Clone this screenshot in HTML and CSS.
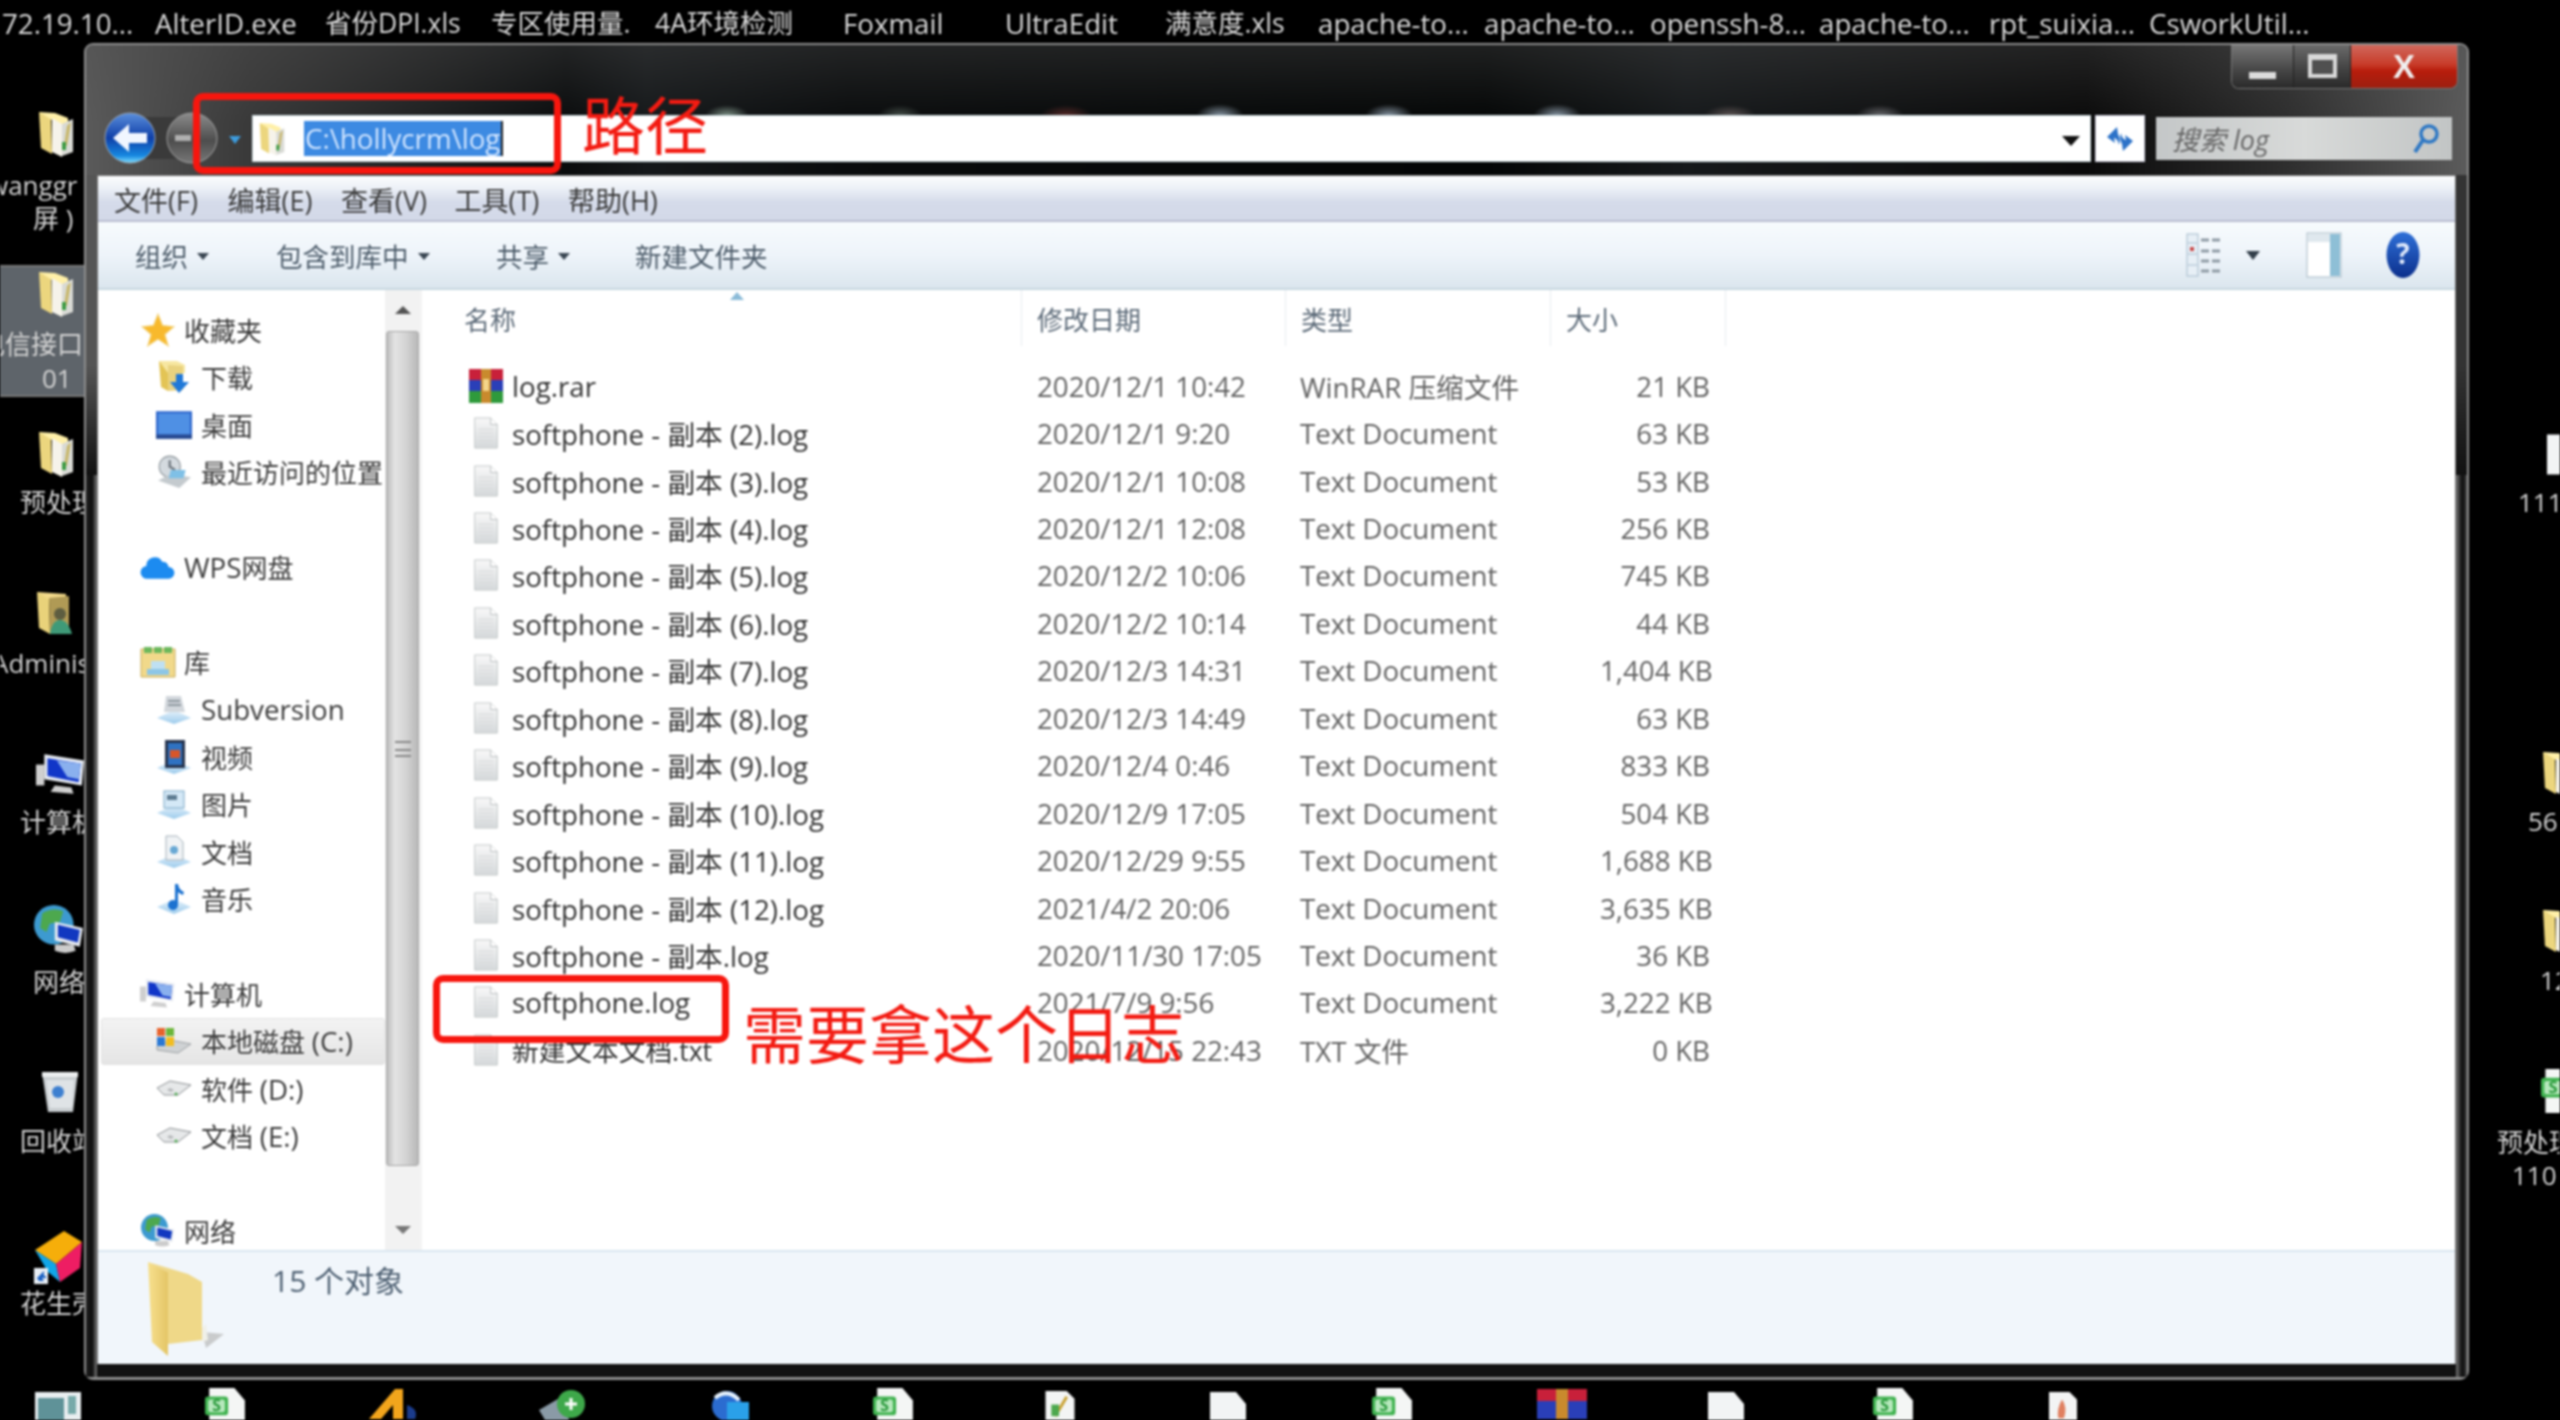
FILE: index.html
```html
<!DOCTYPE html>
<html lang="zh">
<head>
<meta charset="utf-8">
<title>log</title>
<link rel="stylesheet" href="styles.css">
</head>
<body>
<svg class="defs" width="0" height="0" aria-hidden="true">
  <defs>
    <linearGradient id="fy" x1="0" x2="1" y1="0" y2="0"><stop offset="0" stop-color="#f7e08e"/><stop offset="1" stop-color="#e4c566"/></linearGradient>
    <linearGradient id="sky" x1="0" x2="0" y1="0" y2="1"><stop offset="0" stop-color="#e8f3fb"/><stop offset="1" stop-color="#9ccbec"/></linearGradient>
    <linearGradient id="back" x1="0" x2="0" y1="0" y2="1"><stop offset="0" stop-color="#5b8fdc"/><stop offset=".5" stop-color="#0f3fa8"/><stop offset=".85" stop-color="#1687e0"/><stop offset="1" stop-color="#7fe0ff"/></linearGradient>
    <linearGradient id="fwd" x1="0" x2="0" y1="0" y2="1"><stop offset="0" stop-color="#8c8c8c"/><stop offset=".55" stop-color="#4d4d4d"/><stop offset="1" stop-color="#777"/></linearGradient>
    <linearGradient id="help" x1="0" x2="0" y1="0" y2="1"><stop offset="0" stop-color="#2f70d8"/><stop offset="1" stop-color="#0b2f8c"/></linearGradient>
    <linearGradient id="thumbdoc" x1="0" x2="0" y1="0" y2="1"><stop offset="0" stop-color="#f8f8f8"/><stop offset="1" stop-color="#d6dadc"/></linearGradient>

    <symbol id="i-deskfolder" viewBox="0 0 36 48"><path d="M1 2 13 6 14 44 3 38Z" fill="#ecd67e"/><path d="M1 2 17 3 30 8 30 20 14 10Z" fill="#fff0a8"/><path d="M14 8 24 14 24 47 14 42Z" fill="#f6f3ea"/><path d="M24 14 35 9 35 42 24 46Z" fill="#d9dad5"/><path d="M29 16 33 12 29 36 26 36Z" fill="#c8b76a"/><path d="M24 32h4v8h-4z" fill="#3c9a45"/></symbol>
    <symbol id="i-admfolder" viewBox="0 0 36 48"><path d="M1 2 13 6 14 44 3 38Z" fill="#e9d27a"/><path d="M1 2 30 4 30 20 14 10Z" fill="#f2d98a"/><path d="M13 8 33 6 33 42 14 44Z" fill="#b09a55"/><circle cx="24" cy="24" r="6" fill="#5d5d40"/><path d="M14 44q2-14 10-14t12 14Z" fill="#3f9a78"/></symbol>
    <symbol id="i-comp" viewBox="0 0 48 44"><path d="M0 12h8v20H0z" fill="#cfcfcf"/><path d="M8 2 46 8 44 32 8 26Z" fill="#e8ecf3"/><path d="M11 6 43 11 41 29 11 23Z" fill="#1136c8"/><path d="M20 8 30 24 41 26 43 11Z" fill="#8ab0ee"/><path d="M18 32 34 34 36 40 14 38Z" fill="#cfcfcf"/></symbol>
    <symbol id="i-net" viewBox="0 0 48 48"><circle cx="19" cy="19" r="19" fill="#3d9ad0"/><path d="M8 8q10-6 20-2l-3 10-10 2-3 8-6-4Z" fill="#4da84e"/><path d="M20 16 47 22 44 40 20 34Z" fill="#e6eaf0"/><path d="M23 19 44 24 42 36 23 31Z" fill="#1138c0"/><path d="M20 38h18l2 6q-10 4-20 0Z" fill="#ccc"/></symbol>
    <symbol id="i-trash" viewBox="0 0 40 46"><path d="M2 4h36l-5 40H8Z" fill="#c8cdd0"/><path d="M2 4h36v5H2z" fill="#eceeef"/><path d="M6 12h28l-2 28H10Z" fill="#dfe3e6"/><circle cx="18" cy="24" r="6" fill="#3d7fd0"/></symbol>
    <symbol id="i-cube" viewBox="0 0 50 60"><path d="M1 22 30 3 48 14 22 36Z" fill="#f6ae0a"/><path d="M1 22 22 36 26 54 14 44Z" fill="#11a6e8"/><path d="M22 36 48 14 46 40 26 54Z" fill="#ee1d63"/><path d="M0 40h14v16H0z" fill="#e8eef4"/><path d="M3 50 10 43v5h2v2H8l2 3H5Z" fill="#1c62c4"/></symbol>
    <symbol id="i-doc" viewBox="0 0 26 34"><path d="M1 1h17l7 7v25H1Z" fill="url(#thumbdoc)" stroke="#c2c6c8"/><path d="M18 1v7h7" fill="#fff" stroke="#b8bcbe"/><path d="M5 13h16M5 17h16M5 21h16M5 25h16M5 29h16" stroke="#d5d8d9"/></symbol>
    <symbol id="i-wdoc" viewBox="0 0 40 40"><path d="M2 0h26l10 12v28H2Z" fill="#f2f4f5"/></symbol>
    <symbol id="i-sdoc" viewBox="0 0 40 40"><path d="M4 0h24l10 12v28H4Z" fill="#f4f6f5"/><rect x="0" y="8" width="22" height="18" rx="3" fill="#3fb24f"/><rect x="3" y="11" width="16" height="12" rx="2" fill="#b7e8bd"/><text x="11" y="22" class="svgs">S</text></symbol>
    <symbol id="i-rar" viewBox="0 0 36 34"><rect x="1" y="0" width="34" height="11" fill="#c8203a"/><rect x="1" y="11" width="34" height="11" fill="#2a3fb8"/><rect x="1" y="22" width="34" height="12" fill="#2f9a3c"/><rect x="13" y="0" width="10" height="34" fill="#c98a2d"/><rect x="15" y="10" width="6" height="12" fill="#f4d58a"/></symbol>
    <symbol id="i-star" viewBox="0 0 30 30"><path d="M15 1 19 11 29 12 21 19 24 29 15 23 6 29 9 19 1 12 11 11Z" fill="#f8b92c" stroke="#f3d27a"/></symbol>
    <symbol id="i-dl" viewBox="0 0 32 34"><path d="M1 1 10 4V31L3 27Z" fill="#e3c455"/><path d="M1 1h18l8 4v8H10Z" fill="#f7e7a1"/><path d="M10 5 25 6V30L10 31Z" fill="#e9d27f"/><path d="M18 14h7v8h6L21 33 12 22h6Z" fill="#1f78d8"/></symbol>
    <symbol id="i-desktop" viewBox="0 0 34 26"><rect width="34" height="26" fill="#2e66cc"/><rect x="2" y="2" width="30" height="20" fill="#4f90e4"/><rect y="22" width="34" height="4" fill="#284a90"/></symbol>
    <symbol id="i-recent" viewBox="0 0 34 32"><circle cx="13" cy="11" r="10" fill="#d4dadf" stroke="#8f979c"/><path d="M13 5v6l5 3" stroke="#687078" fill="none" stroke-width="2"/><path d="M2 24 14 18 33 21 22 31Z" fill="#c4cace"/><path d="M14 14h14l-2 8H12Z" fill="#7fc0e6"/></symbol>
    <symbol id="i-cloud" viewBox="0 0 34 24"><path d="M7 23a6 6 0 0 1-1-12 8 8 0 0 1 15-4 6 6 0 0 1 6 5 5.500 5.500 0 0 1 0 11Z" fill="#1c8bf0"/></symbol>
    <symbol id="i-lib" viewBox="0 0 36 32"><path d="M1 3h34v28H1Z" fill="#f1d98a" stroke="#c9ad5c"/><path d="M4 1h8v6H4zM14 1h8v6h-8zM24 1h8v6h-8z" fill="#6cb85c"/><path d="M7 23h22v6H7Z" fill="#8dc6e6"/><path d="M11 15h14v8H11Z" fill="#bfe0f2"/></symbol>
    <symbol id="i-svn" viewBox="0 0 36 30"><path d="M1 24 18 16 35 24 18 30Z" fill="url(#sky)"/><path d="M10 2h15l4 16H8Z" fill="#d2d7dc"/><path d="M12 7h12M12 11h13" stroke="#8e979f" stroke-width="2"/></symbol>
    <symbol id="i-vid" viewBox="0 0 36 34"><path d="M1 28 18 20 35 28 18 34Z" fill="url(#sky)"/><rect x="9" y="0" width="20" height="28" fill="#26344e"/><rect x="12" y="3" width="14" height="22" fill="#2f72c2"/><path d="M14 10h10v8H14Z" fill="#d8562a"/></symbol>
    <symbol id="i-pic" viewBox="0 0 36 30"><path d="M1 24 18 16 35 24 18 30Z" fill="url(#sky)"/><rect x="8" y="2" width="20" height="17" fill="#d4e8f6" stroke="#7ba7c6"/><path d="M11 6h10v5H11Z" fill="#5d7c92"/></symbol>
    <symbol id="i-txt" viewBox="0 0 36 32"><path d="M1 26 18 18 35 26 18 32Z" fill="url(#sky)"/><path d="M10 0h11l6 6v18H10Z" fill="#f0f3f5" stroke="#a6b2bb"/><circle cx="18" cy="14" r="4" fill="#68a8d4"/></symbol>
    <symbol id="i-music" viewBox="0 0 36 30"><path d="M1 23 18 15 35 23 18 30Z" fill="url(#sky)"/><path d="M19 0h3q1 6 6 8l-1 3q-3-1-5-3v13a5 5 0 1 1-3-4.500Z" fill="#1c72d0"/></symbol>
    <symbol id="i-drivec" viewBox="0 0 36 30"><path d="M1 20 14 14 35 18 22 27 1 24Z" fill="#cfd2d4" stroke="#9da1a4"/><path d="M1 2h8v8H1z" fill="#e8622c"/><path d="M10 2h8v8h-8z" fill="#6cb63a"/><path d="M1 11h8v9H1z" fill="#2a78d4"/><path d="M10 11h8v9h-8z" fill="#f2bd20"/></symbol>
    <symbol id="i-drive" viewBox="0 0 36 20"><path d="M1 9 14 2 35 6 22 16 8 16Z" fill="#e6e8e9" stroke="#8d9194"/><path d="M14 9l4 2-3 2-4-2Z" fill="#b5b8ba"/><circle cx="20" cy="15" r="1.500" fill="#49a84c"/></symbol>
    <symbol id="i-sfolder" viewBox="0 0 78 98"><path d="M56 72 78 74 60 88Z" fill="#c9cbcc"/><path d="M2 2 42 14 56 22 56 80 22 84 22 12Z" fill="#efd888"/><path d="M2 2 22 12 22 96 6 82Z" fill="url(#fy)"/><path d="M56 68 60 64 62 80 56 82Z" fill="#f0f0e8"/></symbol>
    <symbol id="i-views" viewBox="0 0 36 44"><rect x="1" y="1" width="11" height="42" fill="#e7eff6" stroke="#a6bccc"/><path d="M2 10h9M2 21h9M2 32h9" stroke="#a6bccc"/><rect x="4" y="14" width="4" height="4" fill="#c84a4a"/><path d="M15 7h8M26 7h8M15 18h8M26 18h8M15 28h8M26 28h8M15 38h8M26 38h8" stroke="#8e9aa4" stroke-width="3"/></symbol>
    <symbol id="i-pane" viewBox="0 0 36 46"><rect x="1" y="1" width="34" height="44" fill="#fff" stroke="#a8bac6"/><rect x="2" y="2" width="32" height="8" fill="#dfe8ee"/><rect x="24" y="2" width="10" height="42" fill="#8ebfd6"/></symbol>
    <symbol id="i-help" viewBox="0 0 34 48"><ellipse cx="17" cy="24" rx="16.500" ry="23" fill="url(#help)"/><text x="17" y="33" class="svgq">?</text></symbol>
  </defs>
</svg>

<div class="stage">
  <!-- Desktop -->
  <div class="strip">
    <span class="w">72.19.10...</span><span class="w">AlterID.exe</span><span>省份DPI.xls</span><span>专区使用量.</span><span>4A环境检测</span><span class="w">Foxmail</span><span class="w">UltraEdit</span><span>满意度.xls</span><span class="w">apache-to...</span><span class="w">apache-to...</span><span class="w">openssh-8...</span><span class="w">apache-to...</span><span class="w">rpt_suixia...</span><span class="w">CsworkUtil...</span>
  </div>

  <div class="desk-sel"></div>
  <svg class="dk a1"><use href="#i-deskfolder"/></svg>
  <svg class="dk a2"><use href="#i-deskfolder"/></svg>
  <svg class="dk a3"><use href="#i-deskfolder"/></svg>
  <svg class="dk a4"><use href="#i-admfolder"/></svg>
  <svg class="dk a5"><use href="#i-comp"/></svg>
  <svg class="dk a6"><use href="#i-net"/></svg>
  <svg class="dk a7"><use href="#i-trash"/></svg>
  <svg class="dk a8"><use href="#i-cube"/></svg>
  <span class="lab l1">wanggr</span><span class="lab l2">屏 )</span>
  <span class="lab l3">电信接口</span><span class="lab l4">01</span>
  <span class="lab l5">预处理</span><span class="lab l6">Administrator</span>
  <span class="lab l7">计算机</span><span class="lab l8">网络</span>
  <span class="lab l9">回收站</span><span class="lab l10">花生壳</span>

  <svg class="dk r1"><use href="#i-wdoc"/></svg>
  <svg class="dk r2"><use href="#i-deskfolder"/></svg>
  <svg class="dk r3"><use href="#i-deskfolder"/></svg>
  <svg class="dk r4"><use href="#i-sdoc"/></svg>
  <span class="lab m1">111</span><span class="lab m2">56</span><span class="lab m3">12</span><span class="lab m4">预处理</span><span class="lab m5">110</span>

  <svg class="dk b1" viewBox="0 0 46 30"><rect width="46" height="30" fill="#e8eef0"/><rect x="3" y="6" width="26" height="24" fill="#5f9298"/><rect x="33" y="4" width="8" height="18" fill="#7aa"/></svg>
  <svg class="dk b2"><use href="#i-sdoc"/></svg>
  <svg class="dk b3" viewBox="0 0 50 30"><path d="M0 30 26 0h8v30h-10V16L12 30Z" fill="#f2a51c"/><path d="M38 16q12 4 8 14h-8Z" fill="#1b3c8c"/></svg>
  <svg class="dk b4" viewBox="0 0 46 30"><path d="M0 20 24 6 30 30H6Z" fill="#8a9aa6"/><circle cx="32" cy="14" r="14" fill="#3ea84a"/><path d="M26 14h12M32 8v12" stroke="#fff" stroke-width="3"/></svg>
  <svg class="dk b5" viewBox="0 0 46 30"><circle cx="22" cy="16" r="15" fill="#2b6cd0"/><path d="M10 8q12-10 24 2" stroke="#e6f0fa" stroke-width="4" fill="none"/><rect x="22" y="12" width="22" height="18" fill="#2aa0e8"/></svg>
  <svg class="dk b6"><use href="#i-sdoc"/></svg>
  <svg class="dk b7" viewBox="0 0 34 30"><path d="M2 0h22l8 8v22H2Z" fill="#f3f4f4"/><path d="M12 26 24 6" stroke="#c8a030" stroke-width="3"/><path d="M8 14h8v12H8Z" fill="#4da84e"/></svg>
  <svg class="dk b8"><use href="#i-wdoc"/></svg>
  <svg class="dk b9"><use href="#i-sdoc"/></svg>
  <svg class="dk b10" viewBox="0 0 50 30"><rect x="0" y="0" width="50" height="12" fill="#c8203a"/><rect x="0" y="12" width="50" height="18" fill="#2a3fb8"/><rect x="19" y="0" width="12" height="30" fill="#c98a2d"/></svg>
  <svg class="dk b11"><use href="#i-wdoc"/></svg>
  <svg class="dk b12"><use href="#i-sdoc"/></svg>
  <svg class="dk b13" viewBox="0 0 34 30"><path d="M2 0h22l8 8v22H2Z" fill="#f3f4f4"/><path d="M16 8q6 8 2 20h-6q-2-10 4-20Z" fill="#e08060"/></svg>

  <!-- Explorer window -->
  <div class="window">
    <div class="glass">
      <div class="caption">
        <span class="cap cap-min"><i></i></span>
        <span class="cap cap-max"><i></i></span>
        <span class="cap cap-close">X</span>
      </div>
      <div class="navrow">
        <svg class="navbtns" viewBox="0 0 146 54">
          <path d="M26 6h70v42H26Z" fill="#3a3a3a"/>
          <circle cx="27" cy="27" r="25" fill="url(#back)" stroke="#9aa6b4"/>
          <path d="M10 27 26 13v9h18v10H26v9Z" fill="#f1f6ff"/>
          <circle cx="89" cy="27" r="25" fill="url(#fwd)" stroke="#a0a0a0"/>
          <path d="M72 24h16v6H72Z" fill="#b0b0b0"/>
          <path d="M126 25h12l-6 8Z" fill="#3d9bdc"/>
        </svg>
        <div class="addr">
          <svg class="addr-ico"><use href="#i-deskfolder"/></svg>
          <span class="addr-text">C:\hollycrm\log</span><span class="caret"></span>
          <span class="addr-drop"></span>
        </div>
        <div class="refresh">
          <svg viewBox="0 0 30 26"><path d="M2 11 12 1l1 7q3 5 1 11-1-6-5-7l1 5Z" fill="#2c72c8"/><path d="M28 15 18 25l-1-7q-3-5-1-11 1 6 5 7l-1-5Z" fill="#2c72c8"/></svg>
        </div>
        <div class="search">
          <span>搜索 log</span>
          <svg viewBox="0 0 28 30"><circle cx="17" cy="10" r="8" fill="none" stroke="#2f78c4" stroke-width="3.500"/><path d="M11 16 3 28" stroke="#2f78c4" stroke-width="4"/></svg>
        </div>
      </div>
    </div>

    <div class="client">
      <div class="menubar">
        <span>文件(F)</span><span>编辑(E)</span><span>查看(V)</span><span>工具(T)</span><span>帮助(H)</span>
      </div>
      <div class="toolbar">
        <div class="tb-left">
          <span class="tb">组织<i></i></span>
          <span class="tb">包含到库中<i></i></span>
          <span class="tb">共享<i></i></span>
          <span class="tb">新建文件夹</span>
        </div>
        <div class="tb-right">
          <svg class="ic-views"><use href="#i-views"/></svg><i class="views-arrow"></i>
          <svg class="ic-pane"><use href="#i-pane"/></svg>
          <svg class="ic-help"><use href="#i-help"/></svg>
        </div>
      </div>
      <div class="main">
        <nav class="tree">
          <div class="group">
            <div class="node top"><svg><use href="#i-star"/></svg>收藏夹</div>
            <div class="node"><svg><use href="#i-dl"/></svg>下载</div>
            <div class="node"><svg><use href="#i-desktop"/></svg>桌面</div>
            <div class="node"><svg><use href="#i-recent"/></svg>最近访问的位置</div>
          </div>
          <div class="group">
            <div class="node top"><svg><use href="#i-cloud"/></svg><span class="lat">WPS</span>网盘</div>
          </div>
          <div class="group">
            <div class="node top"><svg><use href="#i-lib"/></svg>库</div>
            <div class="node"><svg><use href="#i-svn"/></svg><span class="lat">Subversion</span></div>
            <div class="node"><svg><use href="#i-vid"/></svg>视频</div>
            <div class="node"><svg><use href="#i-pic"/></svg>图片</div>
            <div class="node"><svg><use href="#i-txt"/></svg>文档</div>
            <div class="node"><svg><use href="#i-music"/></svg>音乐</div>
          </div>
          <div class="group">
            <div class="node top"><svg><use href="#i-comp"/></svg>计算机</div>
            <div class="node current"><svg><use href="#i-drivec"/></svg>本地磁盘&nbsp;<span class="lat">(C:)</span></div>
            <div class="node"><svg><use href="#i-drive"/></svg>软件&nbsp;<span class="lat">(D:)</span></div>
            <div class="node"><svg><use href="#i-drive"/></svg>文档&nbsp;<span class="lat">(E:)</span></div>
          </div>
          <div class="group">
            <div class="node top"><svg><use href="#i-net"/></svg>网络</div>
          </div>
        </nav>
        <div class="vscroll">
          <i class="arrow-up"></i>
          <div class="thumb"><b></b></div>
          <i class="arrow-down"></i>
        </div>
        <div class="files">
          <div class="header">
            <span class="h-name">名称</span><span class="h-date">修改日期</span><span class="h-type">类型</span><span class="h-size">大小</span>
            <i class="sort"></i>
          </div>
          <div class="list">
            <div class="row"><span class="n"><svg class="rar"><use href="#i-rar"/></svg>log.rar</span><span>2020/12/1 10:42</span><span>WinRAR 压缩文件</span><span class="s">21 KB</span></div>
            <div class="row"><span class="n"><svg><use href="#i-doc"/></svg>softphone - 副本 (2).log</span><span>2020/12/1 9:20</span><span>Text Document</span><span class="s">63 KB</span></div>
            <div class="row"><span class="n"><svg><use href="#i-doc"/></svg>softphone - 副本 (3).log</span><span>2020/12/1 10:08</span><span>Text Document</span><span class="s">53 KB</span></div>
            <div class="row"><span class="n"><svg><use href="#i-doc"/></svg>softphone - 副本 (4).log</span><span>2020/12/1 12:08</span><span>Text Document</span><span class="s">256 KB</span></div>
            <div class="row"><span class="n"><svg><use href="#i-doc"/></svg>softphone - 副本 (5).log</span><span>2020/12/2 10:06</span><span>Text Document</span><span class="s">745 KB</span></div>
            <div class="row"><span class="n"><svg><use href="#i-doc"/></svg>softphone - 副本 (6).log</span><span>2020/12/2 10:14</span><span>Text Document</span><span class="s">44 KB</span></div>
            <div class="row"><span class="n"><svg><use href="#i-doc"/></svg>softphone - 副本 (7).log</span><span>2020/12/3 14:31</span><span>Text Document</span><span class="s">1,404 KB</span></div>
            <div class="row"><span class="n"><svg><use href="#i-doc"/></svg>softphone - 副本 (8).log</span><span>2020/12/3 14:49</span><span>Text Document</span><span class="s">63 KB</span></div>
            <div class="row"><span class="n"><svg><use href="#i-doc"/></svg>softphone - 副本 (9).log</span><span>2020/12/4 0:46</span><span>Text Document</span><span class="s">833 KB</span></div>
            <div class="row"><span class="n"><svg><use href="#i-doc"/></svg>softphone - 副本 (10).log</span><span>2020/12/9 17:05</span><span>Text Document</span><span class="s">504 KB</span></div>
            <div class="row"><span class="n"><svg><use href="#i-doc"/></svg>softphone - 副本 (11).log</span><span>2020/12/29 9:55</span><span>Text Document</span><span class="s">1,688 KB</span></div>
            <div class="row"><span class="n"><svg><use href="#i-doc"/></svg>softphone - 副本 (12).log</span><span>2021/4/2 20:06</span><span>Text Document</span><span class="s">3,635 KB</span></div>
            <div class="row"><span class="n"><svg><use href="#i-doc"/></svg>softphone - 副本.log</span><span>2020/11/30 17:05</span><span>Text Document</span><span class="s">36 KB</span></div>
            <div class="row"><span class="n"><svg><use href="#i-doc"/></svg>softphone.log</span><span>2021/7/9 9:56</span><span>Text Document</span><span class="s">3,222 KB</span></div>
            <div class="row"><span class="n cn"><svg><use href="#i-doc"/></svg>新建文本文档.txt</span><span>2020/12/15 22:43</span><span>TXT 文件</span><span class="s">0 KB</span></div>
          </div>
        </div>
      </div>
      <div class="status">
        <svg class="st-folder"><use href="#i-sfolder"/></svg>
        <span class="st-text">15 个对象</span>
      </div>
    </div>
  </div>

  <!-- Red annotations -->
  <div class="mark mark-path"></div>
  <div class="note note-path">路径</div>
  <div class="mark mark-file"></div>
  <div class="note note-file">需要拿这个日志</div>
</div>
</body>
</html>
```

FILE: styles.css
```css
* { box-sizing: border-box; }
html, body { margin: 0; padding: 0; background: #000; }
body {
  width: 2560px;
  height: 1420px;
  overflow: hidden;
  font-family: "Open Sans", "Noto Sans CJK SC", sans-serif;
  font-size: 26px;
  color: #333;
}
.defs { position: absolute; }
.svgs { font: 700 15px "Open Sans", sans-serif; fill: #2a9a3c; text-anchor: middle; }
.svgq { font: 700 28px "Open Sans", sans-serif; fill: #dfe9fb; text-anchor: middle; }
.lat { font-size: 27.700px; }

.stage {
  position: relative;
  width: 2560px;
  height: 1420px;
  background: #000;
  overflow: hidden;
  filter: blur(0.9px);
}

/* Desktop */
.strip {
  display: grid;
  grid-template-columns: 153px 170px 166px 164px 188px 162px 160px 153px 166px 166px 169px 170px 160px auto;
  padding: 4px 0 0 2px;
  height: 43px;
  line-height: 38px;
  color: #dcdcdc;
  white-space: nowrap;
  font-size: 26.500px;
}
.strip .w { font-size: 27.700px; }
.desk-sel { position: absolute; left: 0; top: 265px; width: 84px; height: 132px; background: #5e646a; border-top: 2px solid #777; border-bottom: 2px solid #777; }
.dk { position: absolute; overflow: hidden; }
.a1 { left: 38px; top: 110px; width: 36px; height: 48px; }
.a2 { left: 38px; top: 270px; width: 36px; height: 48px; }
.a3 { left: 38px; top: 430px; width: 36px; height: 48px; }
.a4 { left: 36px; top: 590px; width: 36px; height: 48px; }
.a5 { left: 36px; top: 752px; width: 50px; height: 46px; }
.a6 { left: 34px; top: 905px; width: 50px; height: 50px; }
.a7 { left: 40px; top: 1068px; width: 40px; height: 46px; }
.a8 { left: 34px; top: 1228px; width: 50px; height: 60px; }
.r1 { left: 2545px; top: 433px; width: 40px; height: 43px; }
.r2 { left: 2542px; top: 750px; width: 36px; height: 48px; }
.r3 { left: 2542px; top: 908px; width: 36px; height: 48px; }
.r4 { left: 2541px; top: 1068px; width: 44px; height: 46px; }
.b1 { left: 35px; top: 1392px; width: 46px; height: 30px; }
.b2 { left: 205px; top: 1388px; width: 42px; height: 42px; }
.b3 { left: 369px; top: 1388px; width: 50px; height: 32px; }
.b4 { left: 539px; top: 1390px; width: 46px; height: 30px; }
.b5 { left: 705px; top: 1390px; width: 46px; height: 30px; }
.b6 { left: 873px; top: 1388px; width: 42px; height: 42px; }
.b7 { left: 1043px; top: 1391px; width: 34px; height: 29px; }
.b8 { left: 1208px; top: 1392px; width: 40px; height: 40px; }
.b9 { left: 1372px; top: 1388px; width: 42px; height: 42px; }
.b10 { left: 1537px; top: 1388px; width: 50px; height: 32px; }
.b11 { left: 1706px; top: 1392px; width: 40px; height: 40px; }
.b12 { left: 1873px; top: 1388px; width: 42px; height: 42px; }
.b13 { left: 2046px; top: 1392px; width: 34px; height: 28px; }

.lab { position: absolute; color: #d4d4d4; line-height: 34px; white-space: nowrap; }
.l1 { left: -12px; top: 168px; }
.l2 { left: 33px; top: 201px; }
.l3 { left: -21px; top: 327px; }
.l4 { left: 42px; top: 361px; }
.l5 { left: 20px; top: 485px; }
.l6 { left: -8px; top: 646px; }
.l7 { left: 20px; top: 805px; }
.l8 { left: 33px; top: 965px; }
.l9 { left: 20px; top: 1124px; }
.l10 { left: 20px; top: 1286px; }
.m1 { left: 2518px; top: 485px; }
.m2 { left: 2528px; top: 804px; }
.m3 { left: 2540px; top: 963px; }
.m4 { left: 2497px; top: 1125px; }
.m5 { left: 2512px; top: 1158px; }

/* Window */
.window {
  position: absolute;
  left: 84px;
  top: 43px;
  width: 2385px;
  height: 1337px;
  display: flex;
  flex-direction: column;
  padding: 0 11px 13px 11px;
  border: 2px solid #8d8d8d;
  border-bottom-width: 3px;
  border-radius: 9px;
  background:
    linear-gradient(180deg, rgba(0,0,0,0) 0, rgba(0,0,0,0) 320px, #111 430px, #111 100%),
    linear-gradient(90deg, #555 0, #555 13px, #333 100%);
}
.window::before,
.window::after { content: ""; position: absolute; top: 430px; bottom: 0; width: 11px; }
.window::before { left: 0; background: linear-gradient(90deg, #222, #0c0c0c 55%, #777 100%); }
.window::after { right: 0; background: linear-gradient(90deg, #777, #1a1a1a 45%, #111 70%, #555 100%); }

.glass {
  position: relative;
  height: 130px;
  flex: none;
  margin: 0 -11px;
  padding: 70px 16px 0 12px;
  border-radius: 7px 7px 0 0;
  background:
    radial-gradient(22px 11px at 641px 71px, #7f9488, transparent),
    radial-gradient(22px 11px at 814px 71px, #46504a, transparent),
    radial-gradient(26px 11px at 980px 71px, #5a2a28, transparent),
    radial-gradient(24px 12px at 1134px 71px, #8b9aa8, transparent),
    radial-gradient(24px 12px at 1303px 71px, #8b9aa8, transparent),
    radial-gradient(24px 12px at 1471px 71px, #8b9aa8, transparent),
    radial-gradient(26px 11px at 1644px 71px, #5f5554, transparent),
    radial-gradient(24px 11px at 1794px 71px, #6c6c70, transparent),
    linear-gradient(180deg, rgba(80,80,80,.35) 0, transparent 60%),
    linear-gradient(90deg, #5a5a5a 0, #3a3a3a 160px, #0a0c0d 480px, #15181a 560px, #0a0c0d 760px, #040606 1400px, #16191b 1600px, #0a0a0a 2000px, #2e2e2e 2200px, #5b5b5b 2381px);
}
.caption {
  position: absolute;
  top: 0;
  right: 9px;
  display: flex;
  height: 44px;
  border: 1px solid #777;
  border-top: 0;
  border-radius: 0 0 8px 8px;
  overflow: hidden;
}
.cap { display: flex; align-items: center; justify-content: center; height: 100%; }
.cap-min { width: 62px; background: linear-gradient(180deg, #777, #454545 60%, #2a2a2a); border-right: 1px solid #222; }
.cap-min i { display: block; width: 27px; height: 7px; margin-top: 18px; background: #dcdcdc; }
.cap-max { width: 57px; background: linear-gradient(180deg, #6a6a6a, #404040 60%, #2a2a2a); border-right: 1px solid #222; }
.cap-max i { display: block; width: 29px; height: 24px; border: 4px solid #d8d8d8; border-top-width: 6px; background: #505050; margin-bottom: 2px; }
.cap-close { width: 106px; color: #f0f0f0; font: 700 33px/1 "Liberation Sans", sans-serif; background: linear-gradient(180deg, #d0685c 0, #c83c2a 45%, #b81d0c 60%, #9c1f10 100%); }

.navrow { display: flex; align-items: stretch; height: 47px; }
.navbtns { flex: none; width: 146px; height: 54px; margin: -4px 3px 0 5px; overflow: visible; }
.addr {
  flex: none;
  width: 1839px;
  display: flex;
  align-items: center;
  background: #fff;
  border: 1px solid #c8d8dc;
  position: relative;
}
.addr-ico { width: 26px; height: 36px; margin: 0 19px 0 6px; flex: none; }
.addr-text { background: #3d8ae2; color: #cfe4ff; line-height: 35px; padding: 0 1px; white-space: nowrap; font-size: 27.700px; }
.caret { width: 2px; height: 35px; background: #222; }
.addr-drop { position: absolute; right: 10px; top: 20px; border: 9px solid transparent; border-top: 10px solid #111; border-bottom: 0; }
.refresh { flex: none; width: 50px; margin-left: 4px; background: #fff; border: 1px solid #ccd; display: flex; align-items: center; justify-content: center; }
.refresh svg { width: 30px; height: 26px; }
.search {
  flex: none;
  width: 296px;
  height: 43px;
  margin: 2px 0 0 11px;
  padding: 0 12px 0 16px;
  display: flex;
  align-items: center;
  justify-content: space-between;
  background: linear-gradient(90deg, #c4c7c8, #d8dad9 50%, #c2c5c5);
  color: #666;
  font-style: italic;
  font-size: 27px;
}
.search svg { width: 28px; height: 30px; }

.client {
  flex: 1;
  min-height: 0;
  display: flex;
  flex-direction: column;
  background: #fff;
  border: 1px solid #777;
  border-bottom: 0;
}
.menubar {
  flex: none;
  height: 46px;
  display: grid;
  grid-template-columns: repeat(5, 113.500px);
  align-items: center;
  padding: 3px 0 0 16px;
  background: linear-gradient(180deg, #fbfcfd 0, #eef2f8 25%, #d5dbea 60%, #d3d9e8 100%);
  border-bottom: 2px solid #b9bdd0;
  color: #3a3a3a;
  font-size: 27px;
  white-space: nowrap;
}
.toolbar {
  flex: none;
  height: 68px;
  display: flex;
  align-items: center;
  justify-content: space-between;
  background: linear-gradient(180deg, #f7fbfd 0, #eef4fa 50%, #dbe6ee 100%);
  border-bottom: 2px solid #c7d7e0;
  color: #4d5c6a;
  font-size: 26.500px;
}
.tb-left { display: grid; grid-template-columns: 141px 220px 139px auto; align-items: center; padding-left: 37px; }
.tb { display: inline-flex; align-items: center; white-space: nowrap; }
.tb i { margin-left: 9px; border: 6px solid transparent; border-top: 7px solid #3a4652; border-bottom: 0; margin-top: 3px; }
.tb-right { display: flex; align-items: center; padding-right: 35px; }
.ic-views { width: 36px; height: 44px; margin-right: 24px; }
.views-arrow { width: 0; border: 7px solid transparent; border-top: 9px solid #333f4a; border-bottom: 0; margin-right: 46px; }
.ic-pane { width: 36px; height: 46px; margin-right: 44px; }
.ic-help { width: 34px; height: 48px; }

.main { flex: 1; min-height: 0; display: flex; }
.tree { flex: none; width: 287px; overflow: hidden; padding-top: 16px; }
.group { margin-bottom: 47.450px; }
.node { height: 47.450px; display: flex; align-items: center; padding-left: 58px; white-space: nowrap; color: #3a3a3a; position: relative; }
.node svg { width: 36px; height: 34px; flex: none; margin: 0 9px 0 0; }
.node.top { padding-left: 42px; }
.node.top svg { margin-right: 8px; }
.node.current { background: linear-gradient(180deg, #f3f3f3, #e5e5e5); border: 1px solid #e2e2e2; border-radius: 3px; margin-left: 3px; padding-left: 54px; }
.vscroll { flex: none; width: 35px; background: #f2f2f2; display: flex; flex-direction: column; align-items: center; position: relative; }
.arrow-up { border: 8px solid transparent; border-bottom: 8px solid #555; border-top: 0; margin: 16px 0 17px; }
.arrow-down { border: 8px solid transparent; border-top: 8px solid #777; border-bottom: 0; margin-top: 60px; }
.thumb { width: 33px; height: 835px; background: linear-gradient(90deg, #bcbcbc, #e4e4e4 25%, #d4d4d4 60%, #b8b8b8); border: 1px solid #a8a8a8; border-radius: 3px; display: flex; align-items: center; justify-content: center; }
.thumb b { width: 16px; height: 16px; border-top: 2px solid #888; border-bottom: 2px solid #888; background: linear-gradient(#0000 6px, #888 6px, #888 8px, #0000 8px); }
.files { flex: 1; min-width: 0; background: #fff; border-left: 2px solid #f4f4f4; }
.header { display: grid; grid-template-columns: 600px 264px 265px 175px; height: 57px; position: relative; color: #5d6b79; }
.header span { display: flex; align-items: center; padding: 2px 0 0 15px; border-right: 1px solid #e6ecf1; height: 56px; }
.header .h-name { padding-left: 42px; }
.sort { position: absolute; left: 308px; top: 2px; border: 7px solid transparent; border-bottom: 8px solid #8bbbd8; border-top: 0; }
.list { padding-top: 15px; }
.row { display: grid; grid-template-columns: 615px 263px 300px 110px; height: 47.450px; align-items: center; white-space: nowrap; color: #626262; font-size: 27.700px; }
.row .n { display: flex; align-items: center; padding-left: 51px; color: #333; position: relative; }
.row .n.cn { font-size: 26.700px; }
.row .n svg { width: 26px; height: 32px; margin-right: 13px; flex: none; }
.row .n svg.rar { width: 36px; height: 34px; margin: 0 8px 0 -5px; }
.row .s { text-align: right; }
.status {
  flex: none;
  height: 114px;
  display: flex;
  background: #f1f6fb;
  border-top: 2px solid #d9e6f0;
}
.st-folder { width: 78px; height: 98px; margin: 8px 0 0 48px; flex: none; }
.st-text { margin: 9px 0 0 48px; font-size: 30px; line-height: 40px; color: #4e6072; white-space: nowrap; }

/* Annotations */
.mark { position: absolute; border: 7px solid #f7160e; border-radius: 10px; }
.mark-path { left: 193px; top: 93px; width: 368px; height: 81px; }
.mark-file { left: 433px; top: 975px; width: 296px; height: 68px; }
.note { position: absolute; color: #f31b12; font-size: 63px; line-height: 70px; white-space: nowrap; font-family: "Noto Sans CJK SC", sans-serif; }
.note-path { left: 582px; top: 87px; }
.note-file { left: 743px; top: 996px; }
```
